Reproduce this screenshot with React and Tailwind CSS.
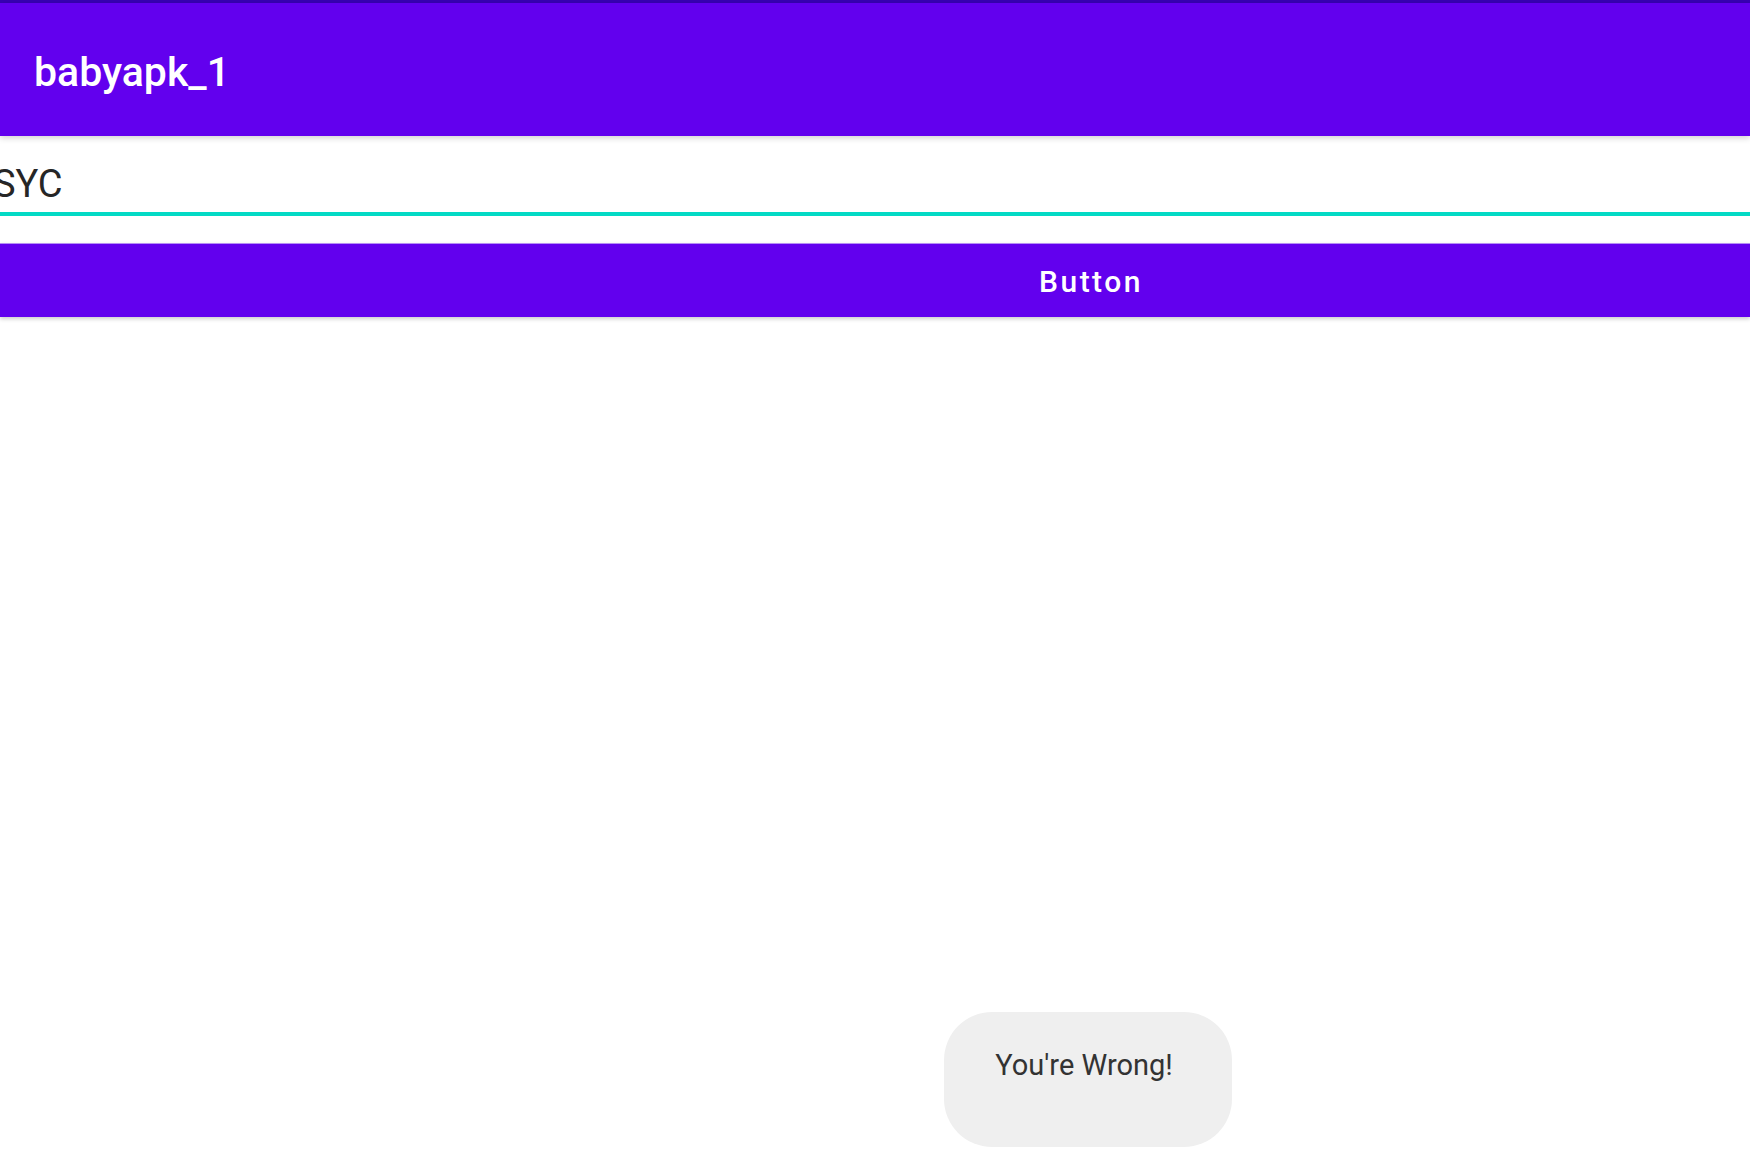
export default function App() {
  return (
    <div className="relative w-[1750px] h-[1165px] bg-white overflow-hidden font-['Roboto',sans-serif]">
      {/* status strip + app bar */}
      <div className="h-[3px] bg-[#3700B3]" />
      <div className="relative z-10 h-[133px] bg-[#6200EE] flex items-center pl-[34px] shadow-[0_2px_6px_rgba(0,0,0,0.18)]">
        <h1 className="text-white text-[41px] font-medium leading-none pt-[6px]">babyapk_1</h1>
      </div>

      {/* edit text */}
      <div className="h-[80px] flex flex-col">
        <div className="flex-1 flex items-end pb-[9px] -ml-[7px]">
          <span className="text-[38px] leading-none text-[#262626]">SYC</span>
        </div>
        <div className="h-[4px] bg-[#03DAC5]" />
      </div>

      {/* button */}
      <div className="mt-[27px] h-[74px] bg-[#6200EE] border-t border-[#b58df5] shadow-[0_2px_4px_rgba(0,0,0,0.2)] flex items-center pl-[1039px]">
        <span className="text-white text-[30px] font-medium tracking-[2.5px] leading-none pt-[2px]">Button</span>
      </div>

      {/* toast */}
      <div className="absolute left-[944px] top-[1012px] w-[288px] h-[135px] rounded-[48px] bg-[#EFEFEF] flex justify-center pt-[39px] pr-[8px]">
        <span className="text-[29px] leading-none text-[#333333]">You're Wrong!</span>
      </div>
    </div>
  );
}
